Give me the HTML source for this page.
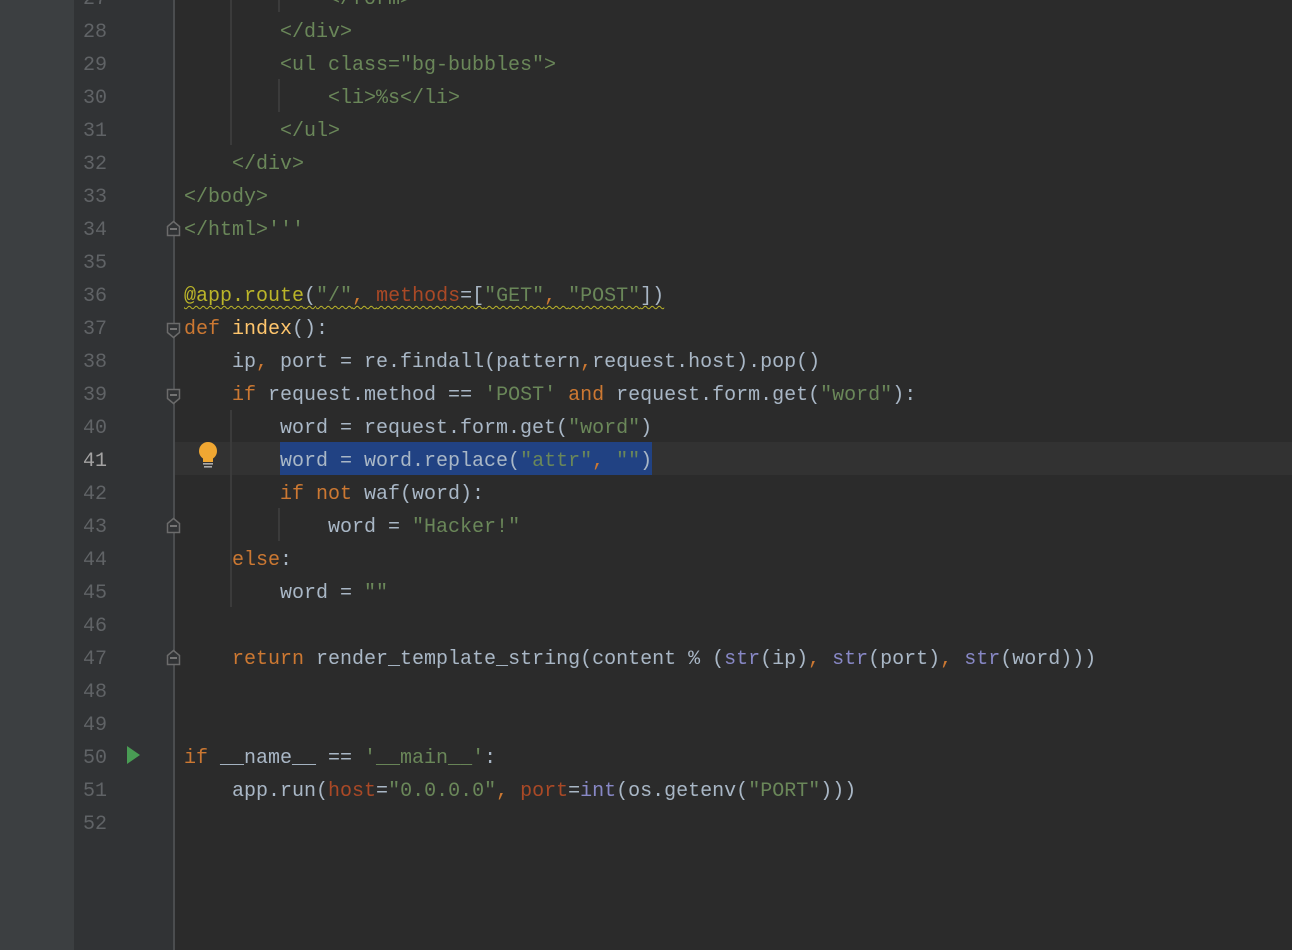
<!DOCTYPE html>
<html><head><meta charset="utf-8"><style>
body{margin:0;width:1292px;height:950px;background:#2b2b2b;overflow:hidden;position:relative;font-family:"Liberation Mono",monospace;font-size:20px}
.strip{position:absolute;left:0;top:0;width:74px;height:950px;background:#3c3f41}
.gut{position:absolute;left:74px;top:0;width:100px;height:950px;background:#313335}
.sep{position:absolute;left:173px;top:0;width:2px;height:950px;background:#4b4d4f}
.cur{position:absolute;left:175px;top:442px;width:1117px;height:33px;background:#323232}
.ln{position:absolute;left:74px;width:33px;text-align:right;color:#606366;height:33px;line-height:33px;margin-top:1px}
.c{position:absolute;left:184px;height:33px;line-height:33px;white-space:pre;color:#a9b7c6;margin-top:1px}
.g{position:absolute;width:2px;background:#3b3b3b}
.s{color:#6a8759}.k{color:#cc7832}.d{color:#bbb529}.p{color:#aa4926}.b{color:#8888c6}.f{color:#ffc66d}
.sel{background:#214283;display:inline-block;height:33px;vertical-align:top;margin-top:-3px;line-height:39px}
.wav{text-decoration:underline wavy #bbb529;text-underline-offset:4px;text-decoration-thickness:1px}
</style></head><body>
<div class="strip"></div><div class="gut"></div><div class="cur"></div><div class="sep"></div>
<div class="g" style="left:230px;top:0;height:145px"></div>
<div class="g" style="left:278px;top:0;height:12px"></div>
<div class="g" style="left:278px;top:79px;height:33px"></div>
<div class="g" style="left:230px;top:410px;height:197px"></div>
<div class="g" style="left:278px;top:508px;height:33px"></div>

<div class="ln" style="top:-18px">27</div><div class="c s" style="top:-18px">            &lt;/form&gt;</div>
<div class="ln" style="top:15px">28</div><div class="c s" style="top:15px">        &lt;/div&gt;</div>
<div class="ln" style="top:48px">29</div><div class="c s" style="top:48px">        &lt;ul class="bg-bubbles"&gt;</div>
<div class="ln" style="top:81px">30</div><div class="c s" style="top:81px">            &lt;li&gt;%s&lt;/li&gt;</div>
<div class="ln" style="top:114px">31</div><div class="c s" style="top:114px">        &lt;/ul&gt;</div>
<div class="ln" style="top:147px">32</div><div class="c s" style="top:147px">    &lt;/div&gt;</div>
<div class="ln" style="top:180px">33</div><div class="c s" style="top:180px">&lt;/body&gt;</div>
<div class="ln" style="top:213px">34</div><div class="c s" style="top:213px">&lt;/html&gt;'''</div>
<div class="ln" style="top:246px">35</div>
<div class="ln" style="top:279px">36</div><div class="c" style="top:279px"><span class="wav"><span class="d">@app.route</span>(<span class="s">"/"</span><span class="k">, </span><span class="p">methods</span>=[<span class="s">"GET"</span><span class="k">, </span><span class="s">"POST"</span>])</span></div>
<div class="ln" style="top:312px">37</div><div class="c" style="top:312px"><span class="k">def </span><span class="f">index</span>():</div>
<div class="ln" style="top:345px">38</div><div class="c" style="top:345px">    ip<span class="k">, </span>port = re.findall(pattern<span class="k">,</span>request.host).pop()</div>
<div class="ln" style="top:378px">39</div><div class="c" style="top:378px">    <span class="k">if </span>request.method == <span class="s">'POST'</span> <span class="k">and </span>request.form.get(<span class="s">"word"</span>):</div>
<div class="ln" style="top:411px">40</div><div class="c" style="top:411px">        word = request.form.get(<span class="s">"word"</span>)</div>
<div class="ln" style="top:444px;color:#a4a3a3">41</div><div class="c" style="top:444px">        <span class="sel">word = word.replace(<span class="s">"attr"</span><span class="k">, </span><span class="s">""</span>)</span></div>
<div class="ln" style="top:477px">42</div><div class="c" style="top:477px">        <span class="k">if not </span>waf(word):</div>
<div class="ln" style="top:510px">43</div><div class="c" style="top:510px">            word = <span class="s">"Hacker!"</span></div>
<div class="ln" style="top:543px">44</div><div class="c" style="top:543px">    <span class="k">else</span>:</div>
<div class="ln" style="top:576px">45</div><div class="c" style="top:576px">        word = <span class="s">""</span></div>
<div class="ln" style="top:609px">46</div>
<div class="ln" style="top:642px">47</div><div class="c" style="top:642px">    <span class="k">return </span>render_template_string(content % (<span class="b">str</span>(ip)<span class="k">, </span><span class="b">str</span>(port)<span class="k">, </span><span class="b">str</span>(word)))</div>
<div class="ln" style="top:675px">48</div>
<div class="ln" style="top:708px">49</div>
<div class="ln" style="top:741px">50</div><div class="c" style="top:741px"><span class="k">if </span>__name__ == <span class="s">'__main__'</span>:</div>
<div class="ln" style="top:774px">51</div><div class="c" style="top:774px">    app.run(<span class="p">host</span>=<span class="s">"0.0.0.0"</span><span class="k">, </span><span class="p">port</span>=<span class="b">int</span>(os.getenv(<span class="s">"PORT"</span>)))</div>
<div class="ln" style="top:807px">52</div>

<svg style="position:absolute;left:0;top:0" width="1292" height="950">
<g fill="#313335" stroke="#6b6b6b" stroke-width="1.5">
<path d="M167.5 235.5v-9l6-5 6 5v9z"/>
<path d="M167.5 323.5v9l6 5 6-5v-9z"/>
<path d="M167.5 389.5v9l6 5 6-5v-9z"/>
<path d="M167.5 532.5v-9l6-5 6 5v9z"/>
<path d="M167.5 664.5v-9l6-5 6 5v9z"/>
</g>
<g stroke="#8a8a8a" stroke-width="1.5">
<path d="M170 229h7M170 329h7M170 395h7M170 526h7M170 658h7"/>
</g>
<path d="M127 746v18l13-9z" fill="#499c54"/>
<circle cx="208" cy="451" r="9" fill="#f0a732"/>
<rect x="203" y="458" width="10" height="4" fill="#f0a732"/>
<rect x="203" y="463" width="10" height="1.6" fill="#aaa"/>
<rect x="204" y="466" width="8" height="1.6" fill="#aaa"/>
</svg>
</body></html>
